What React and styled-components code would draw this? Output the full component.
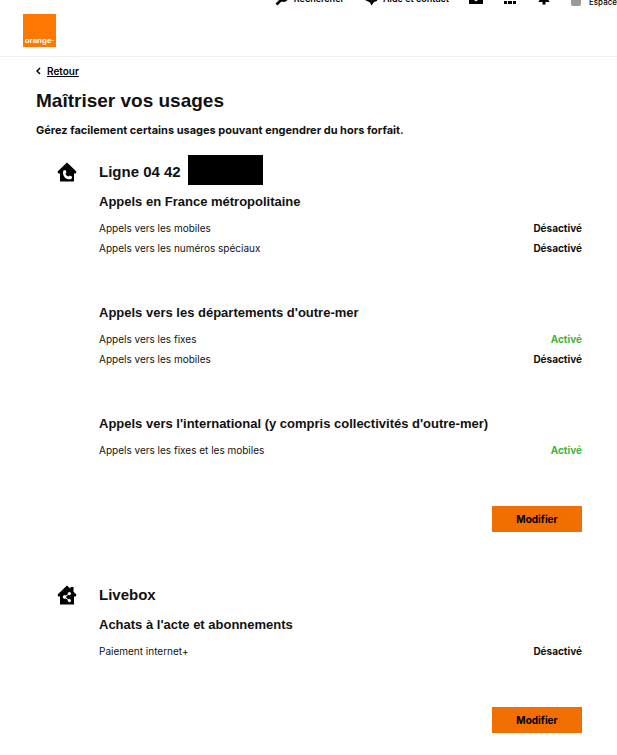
import React from "react";
import styled, { createGlobalStyle } from "styled-components";

const lines = [
  {
    id: "phone",
    title: "Ligne 04 42",
    masked: true,
    groups: [
      {
        title: "Appels en France métropolitaine",
        rows: [
          { label: "Appels vers les mobiles", active: false },
          { label: "Appels vers les numéros spéciaux", active: false },
        ],
      },
      {
        title: "Appels vers les départements d'outre-mer",
        rows: [
          { label: "Appels vers les fixes", active: true },
          { label: "Appels vers les mobiles", active: false },
        ],
      },
      {
        title: "Appels vers l'international (y compris collectivités d'outre-mer)",
        rows: [{ label: "Appels vers les fixes et les mobiles", active: true }],
      },
    ],
  },
  {
    id: "livebox",
    title: "Livebox",
    masked: false,
    groups: [
      {
        title: "Achats à l'acte et abonnements",
        rows: [{ label: "Paiement internet+", active: false }],
      },
    ],
  },
];

function HouseIcon({ type }) {
  return (
    <svg width="20" height="20" viewBox="0 0 20 20" aria-hidden="true">
      {type === "phone" ? (
        <>
          <path
            d="M10 0.5 L19.4 9.5 L18.8 11.5 H17 V19.5 H3 V11.5 H1.2 L0.6 9.5 Z"
            fill="#000"
          />
          <path
            d="M6.4 8.6 L8.6 8 L9.4 10.6 L8.5 11.6 C8.8 13.2 9.8 14.2 11.6 14.6 L12.8 13.5 L15.2 14.8 L14.6 16.8 C12.4 17.9 9.4 17.2 7.6 15.2 C6 13.4 5.6 10.8 6.4 8.6 Z"
            fill="#fff"
          />
        </>
      ) : (
        <>
          <path
            d="M10 0.5 L13.5 3.8 V2 H16.5 V6.7 L19.4 9.5 L18.8 11.5 H17 V19.5 H3 V11.5 H1.2 L0.6 9.5 Z"
            fill="#000"
          />
          <g fill="#fff" stroke="#fff">
            <path d="M12.4 8.6 L7.6 12 L12.4 15.6" fill="none" />
            <circle cx="12.4" cy="8.6" r="1.2" />
            <circle cx="7.6" cy="12" r="1.4" />
            <circle cx="12.4" cy="15.6" r="1.2" />
          </g>
        </>
      )}
    </svg>
  );
}

function Header() {
  return (
    <HeaderBar>
      <Logo href="#" aria-label="orange">
        orange<sup>™</sup>
      </Logo>
      <Nav>
        <NavLink href="#">
          <svg width="14" height="14" viewBox="0 0 14 14">
            <circle cx="8.5" cy="5" r="4" fill="none" stroke="#000" strokeWidth="2" />
            <path d="M6 8 L1.5 12.5" stroke="#000" strokeWidth="2.6" />
          </svg>
          Rechercher
        </NavLink>
        <NavLink href="#">
          <svg width="14" height="14" viewBox="0 0 14 14">
            <path d="M1 1 H13 V9 L10 10 L7.5 13.5 L6 10.5 L1 8 Z" fill="#000" />
            <path d="M5 6 L8 8" stroke="#fff" strokeWidth="1" />
          </svg>
          Aide et contact
        </NavLink>
        <NavLink href="#" aria-label="Messagerie">
          <svg width="14" height="14" viewBox="0 0 14 14">
            <path d="M0 1 H14 V12 H0 Z" fill="#000" />
            <path d="M3 6 L7 9 L11 6" fill="none" stroke="#fff" />
          </svg>
        </NavLink>
        <NavLink href="#" aria-label="Services">
          <svg width="14" height="14" viewBox="0 0 14 14">
            <path
              d="M1 0h3v3h-3z M5 0h4v3h-4z M10 0h3v3h-3z M1 4h3v4h-3z M5 4h4v4h-4z M10 4h3v4h-3z M1 9h3v3h-3z M5 9h4v3h-4z M10 9h3v3h-3z"
              fill="#000"
            />
          </svg>
        </NavLink>
        <NavLink href="#" aria-label="Notifications">
          <svg width="14" height="14" viewBox="0 0 14 14">
            <path d="M7 0 C10 0 10 3 10.5 6 L12.5 10 H8.5 V12.5 H5.5 V10 H1.5 L3.5 6 C4 3 4 0 7 0 Z" fill="#000" />
          </svg>
        </NavLink>
        <AccountLink href="#">
          <svg width="10" height="14" viewBox="0 0 10 14">
            <rect width="10" height="11" rx="2" fill="#999" />
          </svg>
          Espace
        </AccountLink>
      </Nav>
    </HeaderBar>
  );
}

function Line({ line }) {
  return (
    <LineSection>
      <IconCell>
        <HouseIcon type={line.id} />
      </IconCell>
      <LineBody>
        <LineTitle>
          {line.title}
          {line.masked && <Mask />}
        </LineTitle>
        {line.groups.map((group) => (
          <Group key={group.title}>
            <GroupTitle>{group.title}</GroupTitle>
            <dl>
              {group.rows.map((row) => (
                <Row key={row.label}>
                  <dt>{row.label}</dt>
                  <Status $active={row.active}>
                    {row.active ? "Activé" : "Désactivé"}
                  </Status>
                </Row>
              ))}
            </dl>
          </Group>
        ))}
        <EditButton type="button">Modifier</EditButton>
      </LineBody>
    </LineSection>
  );
}

function App() {
  return (
    <>
      <GlobalStyle />
      <Header />
      <Main>
        <BackLink href="#">
          <svg width="5" height="8" viewBox="0 0 5 8" aria-hidden="true">
            <path d="M4 1 L1 4 L4 7" fill="none" stroke="#000" strokeWidth="1.5" />
          </svg>
          <span>Retour</span>
        </BackLink>
        <Title>Maîtriser vos usages</Title>
        <Intro>
          Gérez facilement certains usages pouvant engendrer du hors forfait.
        </Intro>
        {lines.map((line) => (
          <Line key={line.id} line={line} />
        ))}
      </Main>
    </>
  );
}

const headingFont = `"Liberation Sans", Arial, sans-serif`;

const GlobalStyle = createGlobalStyle`
  * {
    box-sizing: border-box;
  }
  body, h1, h2, h3, p, dl, dd {
    margin: 0;
  }
  body {
    background: #fff;
    color: #111;
    font-family: Inter, "Liberation Sans", sans-serif;
    font-size: 10px;
    line-height: 20px;
    overflow-x: hidden;
  }
  a {
    color: #000;
    text-decoration: none;
  }
`;

const HeaderBar = styled.header`
  display: flex;
  justify-content: space-between;
  height: 57px;
  padding-left: 23px;
  border-bottom: 1px solid #eee;
  overflow: hidden;
`;

const Logo = styled.a`
  display: flex;
  align-items: flex-end;
  justify-content: center;
  width: 33px;
  height: 33px;
  margin-top: 14px;
  background: #ff7900;
  color: #fff;
  font: bold 8px/12px ${headingFont};
  sup {
    font-size: 3px;
    line-height: 12px;
  }
`;

const Nav = styled.nav`
  display: flex;
  align-items: center;
  gap: 20px;
  height: 20px;
  margin-top: -11px;
`;

const NavLink = styled.a`
  display: flex;
  align-items: center;
  gap: 5px;
  font-size: 9px;
  font-weight: 600;
  white-space: nowrap;
`;

const AccountLink = styled(NavLink)`
  gap: 8px;
  padding-top: 6px;
  font-size: 8px;
  font-weight: 500;
`;

const Main = styled.main`
  padding: 4px 35px 20px 36px;
`;

const BackLink = styled.a`
  display: inline-flex;
  align-items: center;
  gap: 6px;
  font-weight: 600;
  span {
    text-decoration: underline;
  }
`;

const Title = styled.h1`
  margin-top: 5px;
  font-family: ${headingFont};
  font-size: 19px;
  line-height: 30px;
`;

const Intro = styled.p`
  margin: 4px 0 17px;
  font-size: 11px;
  font-weight: 700;
`;

const LineSection = styled.section`
  display: flex;
  & + & {
    margin-top: 48px;
  }
`;

const IconCell = styled.div`
  width: 63px;
  padding: 5px 0 0 21px;
`;

const LineBody = styled.div`
  display: flex;
  flex: 1;
  flex-direction: column;
`;

const LineTitle = styled.h2`
  display: flex;
  align-items: center;
  gap: 7px;
  height: 30px;
  margin-bottom: 5px;
  font-family: ${headingFont};
  font-size: 15px;
`;

const Mask = styled.span`
  width: 75px;
  height: 30px;
  margin-bottom: 4px;
  background: #000;
`;

const Group = styled.div`
  & + & {
    margin-top: 45px;
  }
`;

const GroupTitle = styled.h3`
  margin-bottom: 6px;
  font-family: ${headingFont};
  font-size: 13px;
`;

const Row = styled.div`
  display: flex;
  justify-content: space-between;
`;

const Status = styled.dd`
  color: ${(props) => (props.$active ? "#3fb53f" : "#111")};
  font-weight: 700;
`;

const EditButton = styled.button`
  align-self: flex-end;
  width: 90px;
  height: 26px;
  margin-top: 46px;
  padding: 0;
  border: 0;
  background: #f16e00;
  color: #000;
  font: 700 10px/20px Inter, "Liberation Sans", sans-serif;
  cursor: pointer;
`;

export default App;
